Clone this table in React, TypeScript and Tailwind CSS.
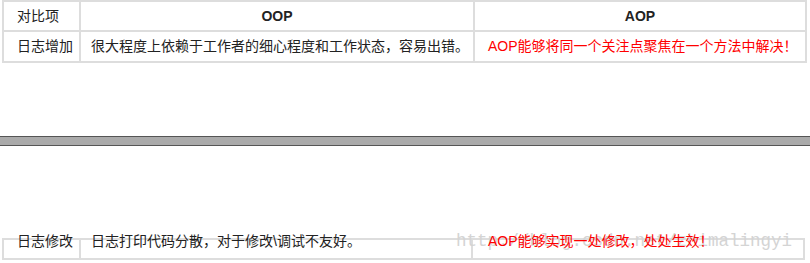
import React from 'react';

const font = "font-['Liberation_Sans','Noto_Sans_CJK_SC',sans-serif]";

function App() {
  return (
    <div className={`w-[810px] h-[263px] overflow-hidden bg-white text-[14px] text-[#222] ${font}`}>
      {/* top table */}
      <div className="ml-[2px] w-[805px] border-2 border-[#dddddd]">
        <div className="flex h-[30px] border-b-2 border-[#dddddd]">
          <div className="w-[77px] shrink-0 border-r-2 border-[#dddddd] pl-[13px] flex items-center">对比项</div>
          <div className="w-[394px] shrink-0 border-r-2 border-[#dddddd] flex items-center justify-center font-bold">OOP</div>
          <div className="flex-1 flex items-center justify-center font-bold">AOP</div>
        </div>
        <div className="flex h-[29px]">
          <div className="w-[77px] shrink-0 border-r-2 border-[#dddddd] pl-[13px] flex items-center">日志增加</div>
          <div className="w-[394px] shrink-0 border-r-2 border-[#dddddd] pl-[10px] flex items-center">
            很大程度上依赖于工作者的细心程度和工作状态，容易出错。
          </div>
          <div className="flex-1 pl-[13px] flex items-center text-[#ff0000]">
            AOP能够将同一个关注点聚焦在一个方法中解决！
          </div>
        </div>
      </div>

      {/* page break bar */}
      <div className="mt-[73px] h-[10px] border-y border-[#555555] bg-[#aaaaaa]" />

      {/* bottom table, cut off */}
      <div className="relative mt-[92px] ml-[2px] w-[803px] h-[22px] border-2 border-[#dddddd]">
        <div className="absolute left-[452px] top-[-7px] font-['Liberation_Mono',monospace] text-[17.5px] leading-none text-[#d4d4d4]">
          http://blog.csdn.net/zhimalingyi
        </div>
        <div className="flex h-full">
          <div className="w-[77px] shrink-0 border-r-2 border-[#dddddd] pl-[13px]">
            <div className="-mt-[9px] relative">日志修改</div>
          </div>
          <div className="w-[392px] shrink-0 border-r-2 border-[#dddddd] pl-[10px]">
            <div className="-mt-[9px] relative">日志打印代码分散，对于修改\调试不友好。</div>
          </div>
          <div className="flex-1 pl-[15px] text-[#ff0000]">
            <div className="-mt-[9px] relative">AOP能够实现一处修改，处处生效！</div>
          </div>
        </div>
      </div>
    </div>
  );
}

export default App;
